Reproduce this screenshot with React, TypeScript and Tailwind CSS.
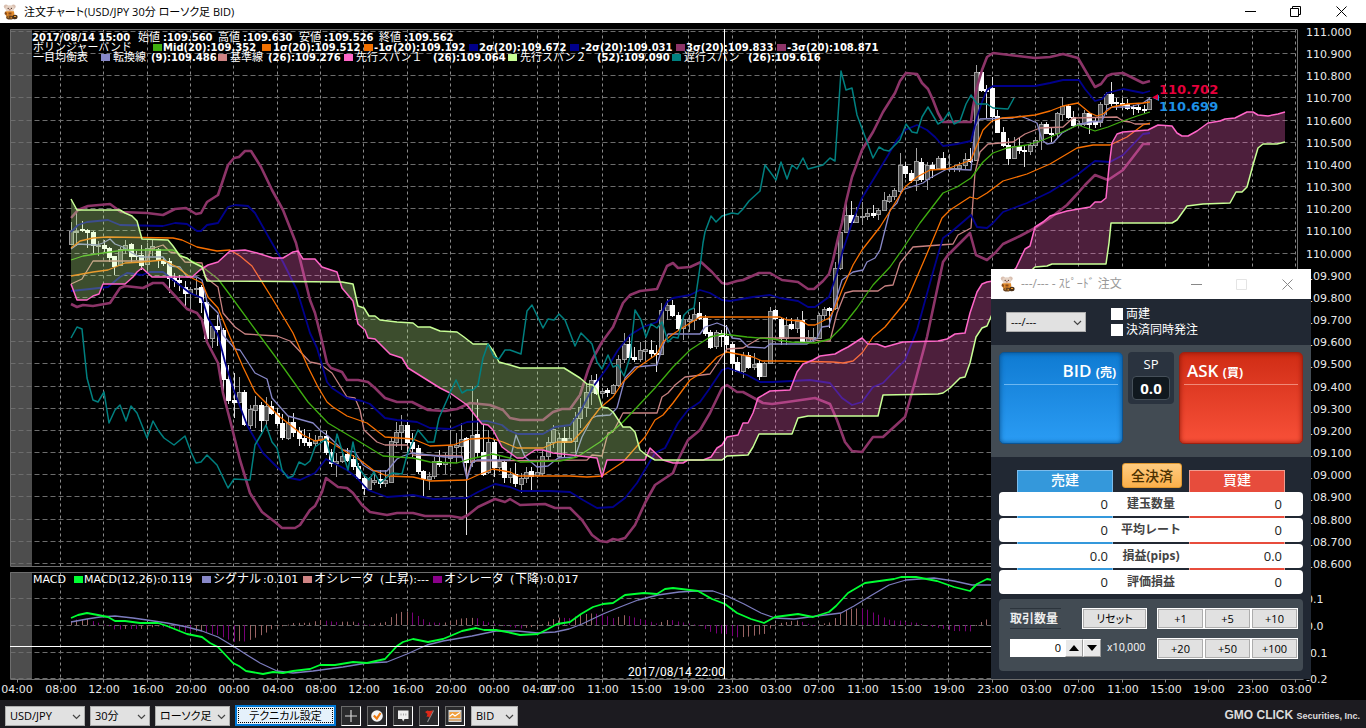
import React from "react";

type Pt = [number, number];

const parse = (s: string): Pt[] =>
  s
    .trim()
    .split(/\s+/)
    .map((p) => p.split(",").map(Number) as Pt);

const valueAt = (pts: Pt[], x: number): number => {
  if (x <= pts[0][0]) return pts[0][1];
  for (let i = 1; i < pts.length; i++) {
    const [x1, y1] = pts[i];
    if (x <= x1) {
      const [x0, y0] = pts[i - 1];
      return x1 === x0 ? y1 : y0 + ((y1 - y0) * (x - x0)) / (x1 - x0);
    }
  }
  return pts[pts.length - 1][1];
};

/* ---------- chart series ---------- */

const SIGMA3 = "71,218 78,210 88,206 110,204 121,212 147,213 163,215 175,209 186,208 196,214 201,213 207,202 218,195 228,165 234,158 239,157 245,151 251,151 261,167 272,190 283,210 296,243 310,300 315,313 321,337 327,363 331,368 342,372 347,380 358,380 368,382 375,388 385,398 397,402 412,402 428,410 445,411 457,409 470,403 490,405 503,410 510,418 520,420 543,420 553,412 562,409 570,409 580,395 588,370 592,360 602,342 613,327 623,303 630,295 640,291 657,289 667,266 673,263 678,268 690,267 701,262 712,272 722,283 727,284 737,281 743,280 759,273 770,273 782,280 798,282 808,289 814,289 823,281 829,274 833,260 838,238 842,223 846,202 852,177 862,150 873,132 883,112 895,93 900,81 906,73 917,74 922,83 928,89 933,100 938,113 943,122 971,122 973,107 977,87 982,70 987,57 993,53 1035,58 1050,57 1063,54 1078,58 1085,70 1095,87 1101,84 1107,76 1112,74 1123,73 1143,83 1150,81";
const SIGMA2 = "71,232 78,225 87,222 108,220 120,225 163,226 175,223 187,224 197,231 201,231 207,225 218,223 228,207 235,205 248,206 255,213 272,243 283,262 297,290 310,333 317,348 327,382 332,388 347,398 362,401 370,404 385,418 397,420 417,422 430,428 450,429 467,422 487,421 502,425 508,430 518,434 543,434 555,427 570,425 580,412 593,387 607,368 618,350 630,335 643,327 657,322 667,302 673,298 690,295 700,290 710,293 722,300 730,301 753,297 770,295 780,298 798,301 808,307 815,307 829,297 837,273 843,250 852,223 862,198 873,180 887,157 897,140 905,130 917,125 927,130 935,137 943,146 957,144 971,141 977,117 982,102 987,90 993,86 1035,86 1050,83 1063,80 1079,80 1085,89 1095,101 1102,99 1107,93 1123,89 1143,93 1150,91";
const SIGMA1 = "71,248 80,241 93,238 107,237 173,238 182,240 197,247 217,251 230,250 240,256 252,266 272,298 293,333 308,367 318,387 327,402 333,407 347,416 367,423 385,437 413,439 430,446 453,445 470,439 490,438 503,442 517,448 543,448 557,442 572,442 583,430 600,408 613,397 623,382 637,368 657,354 663,342 673,334 687,325 700,317 780,317 787,320 802,321 808,325 815,325 829,318 835,308 842,290 853,265 862,250 880,227 895,203 905,187 917,177 930,170 947,169 971,160 977,145 983,130 992,121 1002,118 1017,117 1035,115 1050,111 1063,106 1078,103 1090,113 1097,116 1103,114 1112,107 1127,104 1143,103 1150,102";
const MID = "71,260 83,256 110,252 125,250 173,250 182,256 200,265 218,279 230,295 257,332 283,367 308,402 328,423 343,432 360,442 383,456 413,458 430,462 457,463 470,459 493,454 510,458 520,462 560,461 577,457 600,442 623,422 655,388 673,367 690,350 710,337 723,334 747,337 773,339 790,342 815,343 830,339 842,327 857,308 873,285 890,267 902,250 920,223 943,193 957,187 971,178 983,162 993,153 1007,148 1027,145 1043,140 1060,133 1078,125 1095,131 1108,127 1123,121 1137,116 1150,112";
const SIGMA1N = "71,276 93,272 108,270 125,263 142,262 163,260 177,267 190,277 202,283 208,297 218,308 230,337 243,367 255,392 280,417 303,435 315,441 325,439 343,450 360,460 373,470 387,476 413,477 430,481 467,480 478,475 493,469 510,472 518,476 570,476 587,477 602,476 623,462 645,437 655,420 663,415 673,403 690,380 703,372 717,357 727,352 753,357 762,361 783,361 833,362 843,363 853,361 862,353 873,337 885,327 907,300 923,263 937,230 942,218 950,210 970,197 977,199 987,193 1003,181 1027,174 1050,164 1077,148 1093,145 1110,145 1127,137 1143,125 1150,123";
const SIGMA2N = "71,291 90,289 108,287 120,277 127,273 142,275 150,272 163,272 177,283 190,293 202,298 208,318 218,335 225,362 233,388 247,425 263,453 277,467 290,478 300,480 315,473 326,459 347,470 357,478 368,490 387,497 413,495 433,499 467,498 478,492 495,484 510,487 520,491 550,491 570,492 583,500 597,508 613,507 625,498 637,483 655,453 665,448 678,423 688,410 700,402 710,388 722,370 728,368 747,375 760,382 773,382 810,380 830,383 842,398 852,405 862,402 873,387 883,383 905,360 917,330 928,290 937,258 943,238 950,233 971,215 977,227 987,228 993,223 1003,212 1027,203 1050,192 1077,175 1095,161 1110,162 1123,155 1143,134 1150,133";
const SIGMA3N = "71,304 77,307 83,305 93,306 110,303 120,288 125,286 143,288 153,283 163,283 177,298 187,309 197,313 202,320 207,342 218,363 223,393 230,420 240,460 250,493 262,512 275,522 282,528 295,528 300,525 310,510 315,506 322,492 326,478 338,487 347,488 353,493 362,505 370,512 387,515 397,513 413,513 425,516 450,516 462,518 468,515 478,507 495,499 505,502 510,499 520,505 545,504 555,508 570,508 582,520 592,535 600,541 607,542 613,539 618,540 625,538 635,525 645,503 655,485 673,473 678,460 688,440 700,430 710,413 722,388 727,385 737,392 743,392 763,403 772,404 787,402 815,398 830,404 837,420 845,442 852,451 862,452 873,437 883,437 905,417 915,382 927,337 937,290 943,262 948,255 970,233 976,255 987,260 995,253 1003,244 1020,236 1035,228 1050,218 1067,205 1078,193 1085,185 1095,175 1108,180 1123,170 1143,144 1150,144";
const TENKAN = "71,249 78,244 97,245 103,243 110,239 115,244 123,247 132,253 140,257 163,257 170,266 180,267 187,277 197,277 202,280 207,302 218,313 223,335 235,349 240,350 255,373 267,379 272,398 288,416 313,423 320,430 328,436 343,450 355,452 363,465 373,471 387,471 397,459 403,456 412,453 445,457 462,457 467,479 472,463 477,460 510,460 516,435 525,457 537,467 548,466 558,458 575,457 582,437 592,418 597,416 610,415 617,408 625,378 635,367 657,365 662,348 668,334 700,334 705,327 717,323 727,327 732,338 740,339 748,347 765,348 770,344 807,344 817,338 822,327 829,326 835,303 842,280 853,272 863,270 867,262 875,258 880,250 890,210 897,203 902,190 923,183 930,178 947,169 971,170 975,127 980,119 1013,118 1020,116 1028,119 1037,123 1042,140 1047,144 1053,143 1062,133 1077,125 1090,122 1102,121 1107,109 1112,107 1130,107 1143,103 1150,98";
const KIJUN = "71,284 82,279 93,261 147,261 151,249 163,245 170,252 177,253 185,262 202,263 205,277 218,287 223,313 235,327 245,334 277,336 290,341 310,362 320,364 332,373 347,397 355,398 360,410 364,430 377,442 385,445 407,445 413,455 462,456 467,477 472,461 587,460 592,455 602,456 608,433 613,432 623,413 657,413 662,397 668,393 675,385 685,377 710,374 727,349 743,348 760,338 807,338 820,341 830,341 837,313 845,293 853,291 878,291 885,286 893,285 900,263 913,247 953,244 958,235 971,228 975,173 980,152 988,144 1013,142 1025,134 1040,128 1063,127 1073,118 1117,117 1123,121 1130,122 1135,124 1150,124";
const SPAN_A = "71,284 77,300 87,300 93,296 99,294 103,284 125,284 133,277 137,272 142,268 152,277 192,277 200,270 208,265 218,262 230,251 245,250 257,253 273,258 283,258 293,252 298,251 303,259 315,259 322,267 337,272 342,288 353,301 358,324 365,330 368,338 375,339 390,354 402,358 408,368 440,388 450,393 467,405 482,424 488,425 493,430 502,447 517,458 523,458 535,450 543,450 553,453 580,456 597,458 602,477 607,460 645,460 650,448 663,460 673,463 683,463 688,460 703,460 711,457 717,448 722,445 727,437 738,435 743,423 748,423 753,413 758,398 770,391 790,390 797,372 803,364 813,360 820,356 835,354 842,350 848,347 862,338 868,344 877,344 885,347 903,342 938,341 947,339 955,334 965,333 970,313 977,292 982,284 987,282 1005,279 1016,268 1025,249 1030,246 1035,227 1043,222 1050,216 1067,211 1090,207 1095,202 1101,202 1106,198 1109,167 1112,143 1117,134 1123,132 1148,130 1158,125 1172,126 1177,133 1182,136 1188,136 1197,131 1208,123 1220,121 1225,119 1235,118 1247,112 1253,112 1258,115 1268,116 1278,114 1285,112";
const SPAN_B = "71,199 77,210 120,210 125,213 132,216 137,221 142,239 168,240 173,246 180,256 187,258 192,262 202,267 207,281 342,282 353,284 358,306 364,308 369,316 375,316 380,320 397,322 413,323 418,327 430,327 440,331 457,332 464,337 473,344 488,344 494,352 499,362 510,365 520,368 564,368 580,378 587,384 593,385 597,390 602,407 608,408 613,412 623,427 630,427 635,432 640,450 645,454 655,460 722,460 727,456 748,455 753,447 759,434 792,434 798,418 808,416 878,416 883,395 938,394 943,393 950,388 960,378 965,377 970,363 976,337 982,328 987,326 993,312 1000,300 1035,267 1047,266 1052,264 1106,264 1109,243 1111,223 1172,223 1177,220 1187,206 1203,204 1230,203 1236,192 1242,192 1247,187 1253,165 1258,148 1263,144 1277,144 1285,142";
const CHIKOU = "71,338 77,327 82,329 87,378 93,400 98,402 104,392 109,423 115,410 120,405 126,421 131,406 137,413 147,438 153,421 158,430 164,438 174,445 185,436 191,452 196,463 201,462 207,455 217,465 228,488 234,479 250,480 255,445 262,433 266,425 272,442 277,448 282,470 288,478 293,476 299,462 305,465 310,461 315,447 326,439 332,462 337,434 348,470 353,442 358,467 364,475 369,480 374,472 380,483 392,473 402,474 407,455 418,430 428,442 434,442 439,418 450,393 456,380 462,393 467,390 473,390 478,385 483,358 488,344 494,357 499,359 505,350 510,350 521,354 527,311 532,305 543,328 548,319 554,320 559,314 565,320 575,346 581,333 592,344 597,362 602,369 608,355 613,367 618,365 624,376 630,357 635,310 641,320 646,337 651,324 657,328 662,322 668,342 673,337 678,338 684,315 689,310 694,308 700,267 703,243 705,232 711,216 716,222 722,216 732,213 738,214 743,209 749,201 760,191 765,165 776,180 781,162 787,179 792,165 797,169 803,158 808,169 823,165 830,158 835,161 841,71 846,90 852,88 857,115 873,158 879,147 884,150 889,151 900,140 906,124 912,132 917,133 922,117 928,107 938,124 943,121 949,112 954,124 960,121 966,104 971,95 977,104 987,104 993,108 1008,109 1014,98";
const MACD = "71,618 78,615 87,613 98,615 108,617 115,621 125,621 140,623 158,623 167,626 187,634 202,637 210,643 218,647 233,663 239,666 246,671 263,674 273,672 283,673 293,671 310,669 320,665 335,665 353,662 367,663 385,659 397,646 403,642 413,639 428,642 443,639 455,634 462,631 476,628 484,630 496,630 507,632 520,635 538,634 548,629 557,624 570,622 581,614 593,607 603,604 613,603 625,595 644,593 657,594 665,589 673,588 698,591 712,599 725,604 737,613 751,619 764,623 775,617 798,614 813,617 829,612 836,606 848,593 865,583 894,579 901,577 916,577 937,581 954,587 970,591 977,584 987,579 992,580";
const SIGNAL = "71,622 87,619 100,617 115,616 133,618 147,620 167,623 187,627 202,631 218,637 233,646 247,655 260,663 277,671 293,673 313,671 343,667 367,663 387,662 407,654 427,645 443,641 455,639 472,636 496,631 517,631 538,633 555,632 569,629 582,624 603,614 620,607 638,600 658,595 679,592 696,591 713,591 727,596 744,604 761,613 775,618 794,619 817,616 841,613 854,606 872,595 889,585 906,580 934,578 954,581 972,585 992,585";

/* high, body top, body bottom, low, direction; one entry per 30 minutes */
const CANDLES = `222,231,244,244,u 212,231,232,246,u 221,229,230,232,d 229,230,232,248,d 231,232,245,253,d 241,245,246,256,u 240,245,248,252,d 247,248,257,262,d 256,256,266,275,d 247,249,265,266,u 240,245,249,254,u 243,244,256,262,d 251,255,256,260,d 245,255,265,270,d 243,248,264,270,u 239,246,249,256,u 248,249,259,268,d 258,260,263,266,d 258,261,278,293,d 273,278,280,287,d 275,280,282,291,d 281,287,293,306,d 287,289,293,310,u 278,288,289,295,u 285,287,302,313,d 300,302,338,343,d 325,326,338,348,u 315,326,329,346,d 328,330,379,398,d 365,379,400,404,d 373,400,402,418,d 377,392,402,404,u 390,392,424,426,d
405,409,425,429,u 396,405,410,428,u 402,405,420,432,d 397,406,420,425,u 401,406,413,415,d 408,413,423,426,d 414,423,437,440,d 417,422,438,440,u 413,422,432,437,d 427,431,438,446,d 429,438,442,446,d 433,442,445,448,d 435,440,443,446,u 430,436,440,450,u 431,436,452,455,d 449,452,463,467,d 453,461,463,477,u 450,456,461,463,u 448,454,460,462,d 455,459,466,470,d 463,466,478,480,d 475,478,488,495,d 477,478,489,490,u 473,480,482,485,u 470,479,483,488,d 470,480,483,487,u 438,441,482,483,u 422,432,442,447,u 415,425,432,450,u 420,425,442,453,d 433,442,448,457,d 445,448,471,474,d 470,471,478,497,d 472,476,479,490,u 457,461,476,479,u 450,461,464,467,d 453,462,464,474,u 430,446,458,467,u 433,445,447,463,u 423,439,446,457,u 437,438,462,535,d 386,435,462,467,u 399,434,452,457,d 424,452,474,476,d 430,442,472,474,u 440,442,467,477,d 455,461,467,472,u 460,462,477,483,d 468,474,477,483,u 463,474,483,487,d 473,478,484,493,u 467,472,478,483,u 467,471,476,490,d 462,472,475,478,u 450,456,473,476,u 437,442,456,462,u 425,429,442,448,u 433,438,456,458,u 427,438,442,458,d 427,438,442,443,u 412,418,441,453,u 398,407,418,428,u 383,392,407,417,u 375,380,392,405,u 374,380,393,395,d
388,391,393,397,u 388,390,392,397,d 384,385,393,394,u 355,359,385,387,u 333,344,359,363,u 337,344,357,360,d 347,357,359,362,d 342,350,359,362,u 340,349,351,360,u 340,350,353,358,d 345,353,354,372,d 303,310,354,355,u 299,305,310,320,u 300,305,315,317,d 312,315,328,330,d 315,319,328,340,u 315,319,321,332,u 308,314,320,330,u 302,313,318,320,d 315,318,333,336,d 330,332,347,349,d 330,332,346,349,u 330,333,336,347,d 325,336,344,353,d 342,344,363,375,d 357,362,371,372,d 352,355,371,378,u 352,355,367,369,d 353,364,367,370,u 360,363,376,380,d 362,363,376,377,u 307,311,363,364,u 309,310,318,320,d 318,319,338,345,d 317,325,338,345,u 318,324,328,330,d 317,321,328,333,u 311,320,341,343,d 330,337,341,343,u 328,337,338,342,u 313,315,338,339,u 307,309,315,320,u 307,308,310,328,d 262,268,308,310,u 229,232,268,270,u 202,215,232,233,u 201,215,222,223,d 207,216,222,223,u 202,216,217,225,u 209,213,216,220,u 205,213,215,218,d 208,210,214,220,u 192,200,210,211,u 194,196,201,203,u 188,190,196,200,u 153,165,191,193,u 162,166,173,178,d 170,173,180,183,d 148,161,180,191,u 158,162,179,182,d 162,165,179,190,u 162,165,168,178,d 156,158,168,169,u 152,158,169,170,d 154,168,169,172,u 165,168,169,172,u 162,165,168,172,u 153,159,165,170,u 148,159,161,163,d 65,72,160,161,u 70,72,90,92,d 85,89,91,118,d 77,88,116,122,d 110,116,132,133,d 127,132,145,147,d 138,145,158,165,d 137,146,158,159,u 138,146,150,154,d 145,150,151,167,d 143,145,151,155,u 137,140,145,148,u 122,124,140,150,u 122,124,133,134,d 127,133,134,142,d 112,113,133,138,u 97,106,114,121,u 104,106,117,119,d 111,117,125,127,d 121,123,125,126,u 110,113,124,126,u 112,113,124,134,d 118,122,124,128,d 102,104,122,127,u 92,94,104,115,u 82,94,103,106,d 98,102,103,110,d 98,103,105,110,d 99,104,108,110,d 105,107,108,115,d 105,107,109,113,d 105,109,110,113,d 97,99,109,110,u`
  .trim()
  .split(/\s+/)
  .map((c, i) => {
    const [h, t, b, l, d] = c.split(",");
    return { x: Math.round(71 + i * 5.417), h: +h, t: +t, b: +b, l: +l, up: d === "u" };
  });

const GRID_X = [60, 103, 147, 190, 233, 277, 320, 363, 407, 450, 493, 537, 558, 602, 645, 688, 732, 775, 818, 862, 905, 948, 992, 1035, 1078, 1122, 1165, 1208, 1252, 1295];
const HOURS = "08 12 16 20 00 04 08 12 16 20 00 04 07 11 15 19 23 03 07 11 15 19 23 03 07 11 15 19 23 03".split(" ");
const PRICES = Array.from({ length: 25 }, (_, i) => ({
  y: Math.round(31 + i * 22.16),
  label: (111 - i * 0.1).toFixed(3),
}));
const MACD_ROWS = [
  { y: 598, label: "0.1" },
  { y: 625, label: "0.0" },
  { y: 652, label: "-0.1" },
  { y: 678, label: "-0.2" },
];

const spanA = parse(SPAN_A);
const spanB = parse(SPAN_B);
const macd = parse(MACD);
const signal = parse(SIGNAL);

/* Splits the area between the two leading spans wherever they cross. */
const clouds = (() => {
  const out: { bull: boolean; d: string }[] = [];
  let start = 71;
  const bullAt = (x: number) => valueAt(spanA, x) < valueAt(spanB, x);
  let bull = bullAt(start);
  for (let x = 72; x <= 1285; x++) {
    const now = bullAt(x);
    if (now !== bull || x === 1285) {
      const xs = Array.from({ length: x - start + 1 }, (_, k) => start + k);
      const top = xs.map((v) => `${v},${valueAt(spanA, v).toFixed(1)}`);
      const bottom = xs.reverse().map((v) => `${v},${valueAt(spanB, v).toFixed(1)}`);
      out.push({ bull, d: top.concat(bottom).join(" ") });
      start = x;
      bull = now;
    }
  }
  return out;
})();

const histogram = (() => {
  let prev = 0;
  return CANDLES.filter((c) => c.x < 992).map((c) => {
    const v = valueAt(signal, c.x) - valueAt(macd, c.x);
    const rising = v >= prev;
    prev = v;
    return { x: c.x, v, rising };
  });
})();

const Line = ({ pts, color, w = 1.3 }: { pts: string; color: string; w?: number }) => (
  <polyline points={pts} fill="none" stroke={color} strokeWidth={w} strokeLinejoin="round" />
);

/* ---------- chart legend ---------- */

type Item = { x: number; t: string; jp?: boolean };
type Swatch = { x: number; c: string };

const LEGEND: { y: number; bold: boolean; items: Item[]; swatches: Swatch[] }[] = [
  {
    y: 41,
    bold: true,
    swatches: [],
    items: [
      { x: 32, t: "2017/08/14 15:00" },
      { x: 138, t: "始値", jp: true }, { x: 163, t: ":109.560" },
      { x: 218, t: "高値", jp: true }, { x: 243, t: ":109.630" },
      { x: 299, t: "安値", jp: true }, { x: 324, t: ":109.526" },
      { x: 379, t: "終値", jp: true }, { x: 404, t: ":109.562" },
    ],
  },
  {
    y: 51,
    bold: true,
    swatches: [
      { x: 153, c: "#40b010" }, { x: 262, c: "#f07000" }, { x: 364, c: "#f07000" },
      { x: 469, c: "#00008b" }, { x: 570, c: "#00008b" }, { x: 676, c: "#8c3468" }, { x: 777, c: "#8c3468" },
    ],
    items: [
      { x: 33, t: "ボリンジャーバンド", jp: true },
      { x: 163, t: "Mid(20):109.352" }, { x: 273, t: "1σ(20):109.512" }, { x: 374, t: "-1σ(20):109.192" },
      { x: 479, t: "2σ(20):109.672" }, { x: 581, t: "-2σ(20):109.031" }, { x: 686, t: "3σ(20):109.833" },
      { x: 787, t: "-3σ(20):108.871" },
    ],
  },
  {
    y: 61,
    bold: true,
    swatches: [
      { x: 101, c: "#8888c8" }, { x: 218, c: "#d08484" }, { x: 344, c: "#ff66c8" },
      { x: 508, c: "#c8ff96" }, { x: 672, c: "#008080" },
    ],
    items: [
      { x: 33, t: "一目均衡表", jp: true },
      { x: 113, t: "転換線", jp: true }, { x: 151, t: "(9):109.486" },
      { x: 230, t: "基準線", jp: true }, { x: 268, t: "(26):109.276" },
      { x: 356, t: "先行スパン１", jp: true }, { x: 433, t: "(26):109.064" },
      { x: 520, t: "先行スパン２", jp: true }, { x: 597, t: "(52):109.090" },
      { x: 684, t: "遅行スパン", jp: true }, { x: 748, t: "(26):109.616" },
    ],
  },
  {
    y: 583,
    bold: false,
    swatches: [
      { x: 74, c: "#00ff32" }, { x: 202, c: "#8888c8" }, { x: 303, c: "#d08484" }, { x: 433, c: "#8b008b" },
    ],
    items: [
      { x: 33, t: "MACD" }, { x: 84, t: "MACD(12,26):0.119" },
      { x: 213, t: "シグナル", jp: true }, { x: 263, t: ":0.101" },
      { x: 314, t: "オシレータ", jp: true }, { x: 380, t: "(" }, { x: 385, t: "上昇", jp: true }, { x: 409, t: "):---" },
      { x: 444, t: "オシレータ", jp: true }, { x: 510, t: "(" }, { x: 515, t: "下降", jp: true }, { x: 539, t: "):0.017" },
    ],
  },
];

function Chart() {
  return (
    <svg viewBox="0 23 1366 677" className="block h-auto w-full" role="img" aria-label="USD/JPY 30分 ローソク足">
      <rect x="0" y="23" width="1366" height="677" fill="#000" />
      <rect x="10" y="29" width="22" height="537" fill="#4d4d4d" />
      <rect x="10" y="572" width="22" height="107" fill="#4d4d4d" />

      <g transform="translate(0.5 0.5)" fill="none" strokeWidth="1">
        <g stroke="#8a8a8a" strokeDasharray="3 3">
          {GRID_X.map((x) => (
            <path key={x} d={`M${x} 29V566M${x} 572V679`} />
          ))}
        </g>
        <g stroke="#6c6c6c" strokeDasharray="5 3">
          {PRICES.map((p) => (
            <path key={p.y} d={`M10 ${p.y}H1297`} />
          ))}
          {MACD_ROWS.map((p) => (
            <path key={p.y} d={`M10 ${p.y}H1297`} />
          ))}
        </g>
        <path stroke="#6e6e6e" d="M10 29H1297V566M10 566H1297M10 572H1297V679M10 679H1303M10 29V566M10 572V679" />
        <g stroke="#8a8a8a">
          {[17, ...GRID_X].map((x) => (
            <path key={x} d={`M${x} 679v3`} />
          ))}
        </g>
      </g>

      <g>
        {CANDLES.map((c) => (
          <g key={c.x}>
            <rect x={c.x} y={c.h} width="1" height={c.l - c.h} fill={c.up ? "#a0a0a0" : "#e0e0e0"} />
            {c.up ? (
              <rect x={c.x - 1.5} y={c.t + 0.5} width="4" height={Math.max(1, c.b - c.t)} fill="#505050" stroke="#9c9c9c" />
            ) : (
              <rect x={c.x - 2} y={c.t} width="5" height={Math.max(1.5, c.b - c.t + 1)} fill="#fff" />
            )}
          </g>
        ))}
      </g>

      <Line pts={KIJUN} color="#c88282" />
      <Line pts={TENKAN} color="#8888c8" />
      <Line pts={MID} color="#3fae10" />
      <Line pts={SIGMA1} color="#f87000" />
      <Line pts={SIGMA1N} color="#f87000" />
      <Line pts={SIGMA2} color="#00008b" w={1.8} />
      <Line pts={SIGMA2N} color="#00008b" w={1.8} />
      <Line pts={SIGMA3} color="#8c3468" w={2.6} />
      <Line pts={SIGMA3N} color="#8c3468" w={2.6} />
      {clouds.map((c, i) => (
        <polygon key={i} points={c.d} fill={c.bull ? "#ff66c8" : "#c8ff96"} fillOpacity="0.3" />
      ))}
      <Line pts={SPAN_A} color="#ff66c8" w={1.5} />
      <Line pts={SPAN_B} color="#c8ff96" w={1.5} />
      <Line pts={CHIKOU} color="#008080" w={1.5} />

      {histogram.map((h) => (
        <rect
          key={h.x}
          x={h.x}
          y={h.v > 0 ? 625 - h.v : 625}
          width="1"
          height={Math.max(1, Math.abs(h.v))}
          fill={h.rising ? "#9a6464" : "#780078"}
        />
      ))}
      <Line pts={SIGNAL} color="#7c7cbe" />
      <Line pts={MACD} color="#00ff32" w={1.8} />

      <g fill="#fff">
        <rect x="724" y="29" width="1" height="650" />
        <rect x="10" y="646" width="1287" height="1" />
      </g>
      <text x="628" y="676" fontSize="12" fill="#fff" className="font-['Roboto',sans-serif]">
        2017/08/14 22:00
      </text>

      {LEGEND.map((row) => (
        <g key={row.y}>
          {row.swatches.map((s) => (
            <rect key={s.x} x={s.x} y={row.y - 7} width="9" height="7" fill={s.c} />
          ))}
          {row.items.map((it) => (
            <text
              key={it.x}
              x={it.x}
              y={row.y}
              fill="#fff"
              fontSize={it.jp ? (row.bold ? 11 : 12) : row.bold ? 10 : 11}
              fontWeight={row.bold && !it.jp ? 700 : 400}
              className={
                it.jp
                  ? "font-['Noto_Sans_CJK_JP',sans-serif]"
                  : "font-['DejaVu_Sans','Noto_Sans_CJK_JP',sans-serif]"
              }
            >
              {it.t}
            </text>
          ))}
        </g>
      ))}

      <g className="font-['DejaVu_Sans',sans-serif]" fontSize="11" fill="#e8e8e8">
        {PRICES.map((p) => (
          <text key={p.y} x="1306" y={p.y + 5}>
            {p.label}
          </text>
        ))}
        {MACD_ROWS.map((p) => (
          <text key={p.y} x="1306" y={p.y + 5}>
            {p.label}
          </text>
        ))}
        <g textAnchor="middle">
          <text x="17" y="693">04:00</text>
          {GRID_X.map((x, i) => (
            <text key={x} x={x + 1} y="693">
              {HOURS[i]}:00
            </text>
          ))}
        </g>
      </g>

      <path d="M1153 98l6-3v6z" fill="#1e90e6" />
      <path d="M1152 97.500l6-3.500v6z" fill="#e6003c" />
      <g className="font-['DejaVu_Sans',sans-serif]" fontSize="13" fontWeight="700">
        <text x="1159" y="94" fill="#e6003c">110.702</text>
        <text x="1159" y="111" fill="#1e90e6">110.699</text>
      </g>
    </svg>
  );
}

/* ---------- small parts ---------- */

const Mascot = () => (
  <svg viewBox="0 0 16 16" className="size-4 shrink-0" aria-hidden="true">
    <circle cx="4" cy="2.600" r="2.200" fill="#d9bfb0" />
    <circle cx="11.500" cy="2.600" r="2.200" fill="#d9bfb0" />
    <ellipse cx="7.800" cy="4.500" rx="4.400" ry="3.200" fill="#e6d2c4" />
    <circle cx="6.200" cy="4.400" r="0.600" fill="#4a3028" />
    <circle cx="9.400" cy="4.400" r="0.600" fill="#4a3028" />
    <ellipse cx="7.800" cy="5.800" rx="1.100" ry="0.700" fill="#b07868" />
    <path d="M3.500 7.200h8.500l.6 5.500H4z" fill="#e08a2c" />
    <path d="M3 7.500l2 1.500-.5 2.500L2.500 10zM6.500 8.500h3v2h-3z" fill="#8a4a18" />
    <ellipse cx="8" cy="13.500" rx="3.800" ry="2" fill="#6b4420" />
    <ellipse cx="13" cy="13" rx="2.600" ry="2.300" fill="#4a3018" />
    <path d="M5.500 13h1.500M8.500 13.800H10M12 12.500h2" stroke="#f0a030" strokeWidth="1" />
  </svg>
);

type SelectProps = { label: string; value: string; className: string };
const Select = ({ label, value, className }: SelectProps) => (
  <div className={`relative h-5 ${className}`}>
    <select
      aria-label={label}
      className="block h-full w-full appearance-none border border-[#adadad] bg-[#e1e1e1] pl-1 text-[11px] leading-4 text-black [font-feature-settings:'palt']"
    >
      <option>{value}</option>
    </select>
    <svg viewBox="0 0 9 6" className="pointer-events-none absolute right-1 top-2 h-1.5 w-[9px]" aria-hidden="true">
      <path d="M1 1l3.500 3.500L8 1" fill="none" stroke="#444" strokeWidth="1.200" />
    </svg>
  </div>
);

const ToolButton = ({ label, children }: { label: string; children: React.ReactNode }) => (
  <button
    type="button"
    aria-label={label}
    className="grid size-5 place-items-center border border-[#6a6a6a] border-b-white border-r-white bg-[#2a2a2c]"
  >
    <svg viewBox="0 0 16 16" className="size-4" aria-hidden="true">
      {children}
    </svg>
  </button>
);

function Toolbar() {
  return (
    <footer className="flex h-7 items-center bg-[#1c1b20] pb-px pl-[5px] pr-1.5 pt-1">
      <div className="flex h-5 items-center gap-[5px]">
        <Select label="通貨ペア" value="USD/JPY" className="w-20" />
        <Select label="足種" value="30分" className="w-[60px]" />
        <Select label="チャート種別" value="ローソク足" className="w-[75px]" />
        <button
          type="button"
          className="h-[21px] w-[101px] border-2 border-[#0078d7] bg-[#e5f1fb] p-px text-[11px] text-black [font-feature-settings:'palt']"
        >
          <span className="grid h-full place-items-center border border-dotted border-black leading-3">
            テクニカル設定
          </span>
        </button>
      </div>
      <div className="ml-[5px] flex h-5 items-center gap-1.5">
        <ToolButton label="十字カーソル">
          <path d="M8 2v12M2 8h12" stroke="#d8d8d8" strokeWidth="1.200" />
        </ToolButton>
        <ToolButton label="注文">
          <circle cx="8" cy="8" r="5.800" fill="#f4f4f4" />
          <path d="M4.800 7.500l3 3L11.500 5" fill="none" stroke="#ee7a10" strokeWidth="2.200" />
        </ToolButton>
        <ToolButton label="コメント">
          <path d="M3 2.500h10.500v8.500H9.500L8.200 13.500 7 11H3z" fill="#f0f0f0" />
          <path d="M6 5.500v2M8.500 5.500v2M10.800 5.500v2" stroke="#aaa" />
        </ToolButton>
        <ToolButton label="フラグ">
          <path d="M12.500 2.500L6.500 14" stroke="#888" strokeWidth="1.200" />
          <path d="M4 4l2.500-1.500 1.500.5 4-.5-3.500 7-1.500-1-1.500.5 1-3z" fill="#e02818" />
        </ToolButton>
        <ToolButton label="チャート画像">
          <rect x="1.500" y="2" width="13" height="12" fill="#d8d8d8" />
          <rect x="2.500" y="4" width="11" height="6" fill="#f0a040" />
          <path d="M2.500 8.500l3-2.500 2.500 2 5-3.500" fill="none" stroke="#fff" strokeWidth="1.200" />
          <path d="M2.500 12h11" stroke="#d07818" strokeWidth="2" strokeDasharray="1 1" />
        </ToolButton>
        <Select label="BID/ASK" value="BID" className="w-[47px]" />
      </div>
      <p className="ml-auto font-['Liberation_Sans',sans-serif] text-xs font-bold leading-4 text-[#dcdcdc]">
        GMO CLICK <span className="text-[9px]">Securities, Inc.</span>
      </p>
    </footer>
  );
}

/* ---------- order dialog ---------- */

const ROWS = [
  ["0", "建玉数量", "0"],
  ["0", "平均レート", "0"],
  ["0.0", "損益(pips)", "0.0"],
  ["0", "評価損益", "0"],
];

const CheckRow = ({ id, label }: { id: string; label: string }) => (
  <div className="flex h-4 items-center gap-[3px]">
    <input id={id} type="checkbox" className="size-3 appearance-none bg-white checked:bg-[#2196ee]" />
    <label htmlFor={id} className="text-xs leading-4 text-white">
      {label}
    </label>
  </div>
);

const Step = ({ children }: { children: string }) => (
  <button
    type="button"
    className="h-[21px] w-[47px] border border-white bg-[#adadad] p-px font-['Open_Sans',sans-serif] text-[11px] leading-4 text-black"
  >
    <span className="grid h-full place-items-center bg-[#e1e1e1]">{children}</span>
  </button>
);

function OrderDialog() {
  return (
    <section aria-label="スピード注文" className="absolute right-[55px] top-[246px] w-80 bg-[#212833]">
      <header className="flex h-[30px] items-center bg-white pl-2 text-[#999]">
        <Mascot />
        <h2 className="ml-1.5 text-xs">---/--- - ｽﾋﾟｰﾄﾞ 注文</h2>
        <div className="ml-auto flex">
          <button type="button" aria-label="最小化" className="grid h-7 w-[45px] place-items-center">
            <svg viewBox="0 0 11 11" className="size-[11px]"><path d="M0 5.500h11" stroke="#888" /></svg>
          </button>
          <button type="button" aria-label="最大化" className="grid h-7 w-[45px] place-items-center">
            <svg viewBox="0 0 11 11" className="size-[11px]"><path d="M.5.5h10v10H.5z" fill="none" stroke="#e4e4e4" /></svg>
          </button>
          <button type="button" aria-label="閉じる" className="grid h-7 w-[47px] place-items-center">
            <svg viewBox="0 0 11 11" className="size-[11px]"><path d="M.5.5l10 10M10.500.5l-10 10" stroke="#888" /></svg>
          </button>
        </div>
      </header>

      <div className="flex h-[46px] items-start pl-[15px] pt-[7px]">
        <div className="pt-1.5">
          <Select label="銘柄" value="---/---" className="w-20" />
        </div>
        <div className="ml-[25px]">
          <CheckRow id="both" label="両建" />
          <CheckRow id="settle" label="決済同時発注" />
        </div>
      </div>

      <div className="flex h-28 items-start justify-between bg-[#424b53] px-2 pt-[7px]">
        <button
          type="button"
          className="flex h-[92px] w-[124px] flex-col rounded-[5px] border border-[#0a5596] bg-linear-to-b from-[#0f7bd2] to-[#2a9cf4] px-1 pt-1 text-white shadow-[inset_0_0_5px_#0a4f8c]"
        >
          <span className="block h-7 w-full border-b border-[#6db6f0] pr-0.5 text-right font-['Open_Sans','Noto_Sans_CJK_JP',sans-serif] text-[17px] font-semibold leading-7">
            BID <span className="text-xs font-bold">(売)</span>
          </span>
        </button>
        <div className="flex h-[52px] w-[46px] flex-col items-center rounded bg-[#2a333f] text-white">
          <span className="font-['Open_Sans',sans-serif] text-[13px] leading-6">SP</span>
          <output className="grid h-6 w-[38px] place-items-center rounded border border-[#46505a] bg-[#10181f] font-['Open_Sans',sans-serif] text-[15px] font-bold leading-5">
            0.0
          </output>
        </div>
        <button
          type="button"
          className="flex h-[92px] w-[124px] flex-col rounded-[5px] border border-[#a02010] bg-linear-to-b from-[#d02c14] to-[#f85038] px-1 pt-1 text-white shadow-[inset_0_0_5px_#901808]"
        >
          <span className="block h-7 w-full border-b border-[#f08a78] pl-[3px] text-left font-['Open_Sans','Noto_Sans_CJK_JP',sans-serif] text-[17px] font-semibold leading-7">
            ASK <span className="text-xs font-bold">(買)</span>
          </span>
        </button>
      </div>

      <div className="relative px-2 pt-[11px]">
        <div className="absolute left-[26px] top-[13px] h-[114px] w-24 border border-[#7cbcec] bg-[#3498db]" />
        <div className="absolute right-[26px] top-[13px] h-[114px] w-24 border border-[#f09c90] bg-[#e74c3c]" />
        <button
          type="button"
          className="absolute left-[131px] top-1.5 z-10 h-[25px] w-[60px] rounded-[3px] border border-[#e09830] bg-linear-to-b from-[#ffcc80] to-[#fbb04a] text-sm leading-5 font-medium text-[#4a3000]"
        >
          全決済
        </button>
        <table className="relative w-full table-fixed border-separate border-spacing-x-0 border-spacing-y-[2px] text-[#444]">
          <thead>
            <tr className="h-5 text-sm leading-5 text-white">
              <th className="w-[114px] p-0 pl-[18px] font-medium">売建</th>
              <th className="p-0" aria-label="項目" />
              <th className="w-[114px] p-0 pr-[18px] font-medium">買建</th>
            </tr>
          </thead>
          <tbody>
            {ROWS.map(([sell, name, buy]) => (
              <tr key={name} className="h-6">
                <td className="rounded-l bg-white p-0 pr-[5px] text-right font-['Open_Sans',sans-serif] text-[13px] leading-6 text-[#222]">
                  {sell}
                </td>
                <th scope="row" className="bg-white p-0 text-center text-xs leading-6 font-bold">
                  {name}
                </th>
                <td className="rounded-r bg-white p-0 pr-[21px] text-right font-['Open_Sans',sans-serif] text-[13px] leading-6 text-[#222]">
                  {buy}
                </td>
              </tr>
            ))}
          </tbody>
        </table>
      </div>

      <div className="px-2 pb-2 pt-[3px]">
        <div className="flex h-[72px] items-start justify-between rounded bg-[#424b53] pl-[11px] pr-[5px] pt-[9px]">
          <div className="flex w-[137px] flex-col gap-[9px]">
            <div className="flex h-[21px] justify-between">
              <label
                htmlFor="qty"
                className="w-[51px] border-y border-[#2c343c] text-xs font-bold leading-5 text-[#eee]"
              >
                取引数量
              </label>
              <button
                type="button"
                className="h-[21px] w-[65px] border border-white bg-[#adadad] p-px text-[11px] leading-4 text-black [font-feature-settings:'palt']"
              >
                <span className="grid h-full place-items-center bg-[#e1e1e1]">リセット</span>
              </button>
            </div>
            <div className="flex h-[19px] items-center">
              <input
                id="qty"
                defaultValue="0"
                className="h-[18px] w-[55px] bg-white pr-1 text-right font-['Open_Sans',sans-serif] text-[11px] text-black"
              />
              <button type="button" aria-label="増やす" className="grid h-[18px] w-[18px] place-items-center border border-[#999] border-l-white border-t-white bg-[#e8e8e8]">
                <svg viewBox="0 0 10 6" className="h-1.5 w-2.5"><path d="M5 0l5 6H0z" /></svg>
              </button>
              <button type="button" aria-label="減らす" className="grid h-[18px] w-[18px] place-items-center border border-[#999] border-l-white border-t-white bg-[#e8e8e8]">
                <svg viewBox="0 0 10 6" className="h-1.5 w-2.5"><path d="M5 6l5-6H0z" /></svg>
              </button>
              <span className="ml-1.5 whitespace-nowrap font-['Roboto',sans-serif] text-[11px] leading-4 text-[#eee]">
                x10,000
              </span>
            </div>
          </div>
          <div className="grid grid-cols-3 gap-y-[9px]">
            {["+1", "+5", "+10", "+20", "+50", "+100"].map((s) => (
              <Step key={s}>{s}</Step>
            ))}
          </div>
        </div>
      </div>
    </section>
  );
}

export default function App() {
  return (
    <div className="flex min-h-screen flex-col bg-black font-['Open_Sans','Noto_Sans_CJK_JP',sans-serif]">
      <header className="flex h-[23px] items-center bg-white pl-0.5 pr-px text-black">
        <Mascot />
        <h1 className="ml-1.5 text-[11px] leading-4 [font-feature-settings:'palt']">
          注文チャート(USD/JPY 30分 ローソク足 BID)
        </h1>
        <div className="ml-auto flex">
          <button type="button" aria-label="最小化" className="grid h-5 w-[45px] place-items-center">
            <svg viewBox="0 0 11 11" className="size-[11px]"><path d="M0 5.500h11" stroke="#000" /></svg>
          </button>
          <button type="button" aria-label="元に戻す" className="grid h-5 w-[45px] place-items-center">
            <svg viewBox="0 0 11 11" className="size-[11px]">
              <path d="M.5 2.500h8v8h-8zM2.500 2.500v-2h8v8h-2" fill="none" stroke="#000" />
            </svg>
          </button>
          <button type="button" aria-label="閉じる" className="grid h-5 w-[47px] place-items-center">
            <svg viewBox="0 0 11 11" className="size-[11px]"><path d="M.5.5l10 10M10.500.5l-10 10" stroke="#000" /></svg>
          </button>
        </div>
      </header>
      <main className="relative flex-1">
        <Chart />
        <OrderDialog />
      </main>
      <Toolbar />
    </div>
  );
}
